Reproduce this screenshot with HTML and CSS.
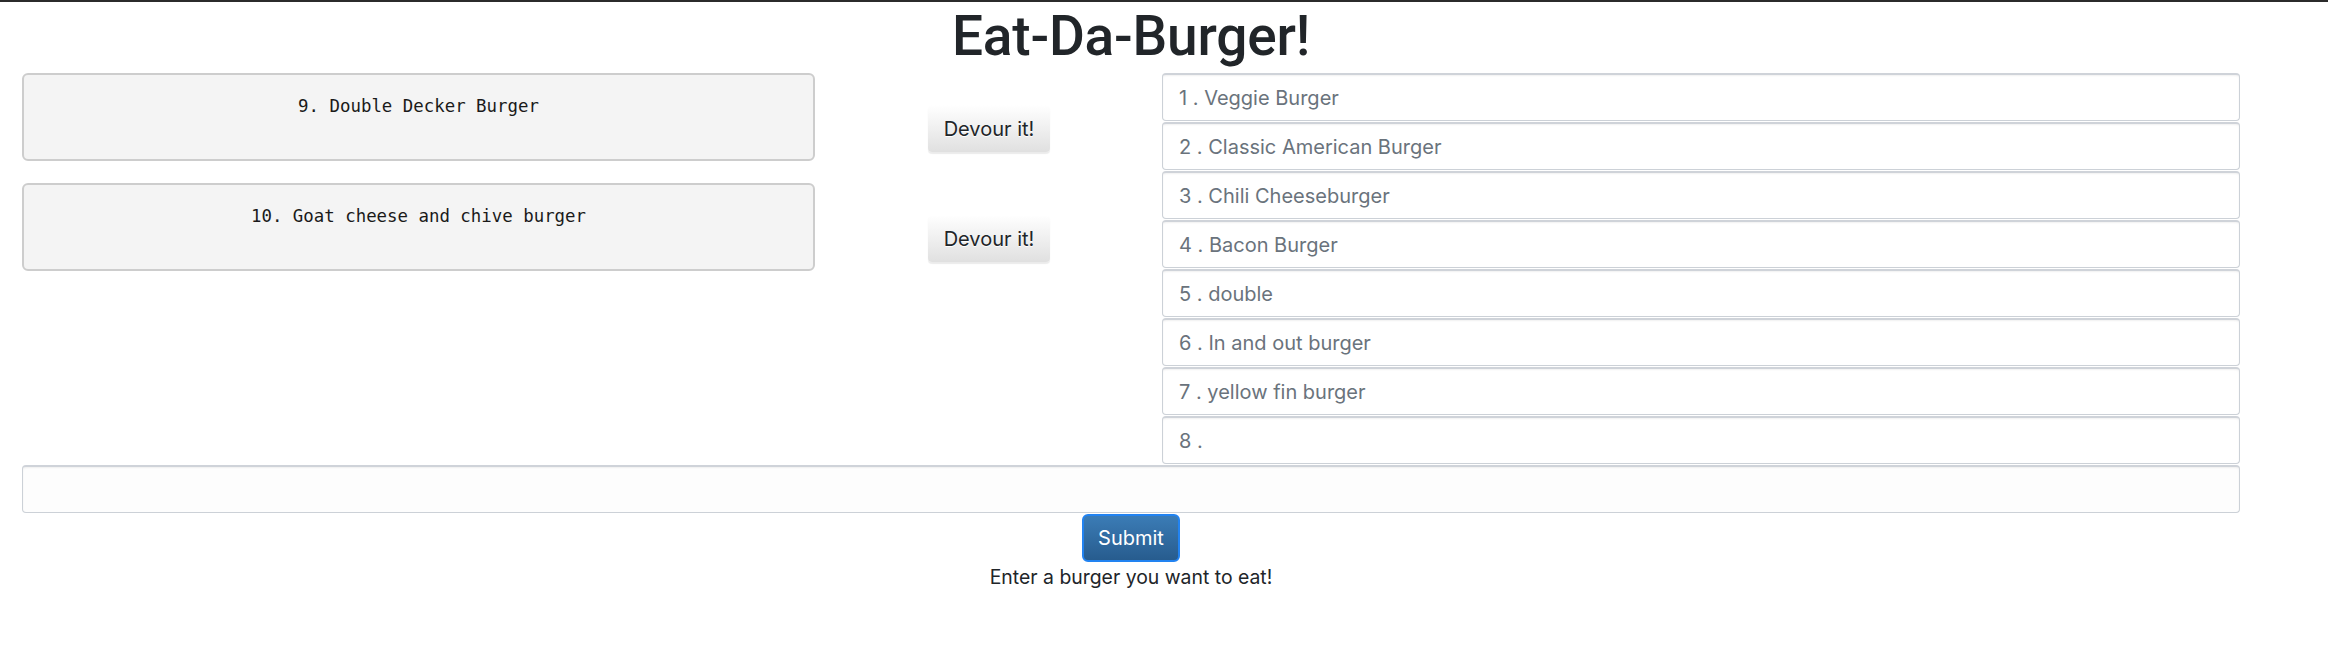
FILE: index.html
```html
<!DOCTYPE html>
<html lang="en">
<head>
<meta charset="utf-8">
<title>Eat-Da-Burger!</title>
<link rel="stylesheet" href="styles.css">
</head>
<body>
<div class="page">
  <h1 class="title">Eat-Da-Burger!</h1>
  <div class="main">
    <div class="devoured">
      <div class="row">
        <div class="card">9. Double Decker Burger</div>
        <button class="btn-devour" type="button">Devour it!</button>
      </div>
      <div class="row">
        <div class="card">10. Goat cheese and chive burger</div>
        <button class="btn-devour" type="button">Devour it!</button>
      </div>
    </div>
    <ul class="list">
      <li class="item">1 . Veggie Burger</li>
      <li class="item">2 . Classic American Burger</li>
      <li class="item">3 . Chili Cheeseburger</li>
      <li class="item">4 . Bacon Burger</li>
      <li class="item">5 . double</li>
      <li class="item">6 . In and out burger</li>
      <li class="item">7 . yellow fin burger</li>
      <li class="item">8 .</li>
    </ul>
  </div>
  <form class="form">
    <input class="field" type="text" aria-label="Burger name">
    <button class="btn-submit" type="button">Submit</button>
    <p class="hint">Enter a burger you want to eat!</p>
  </form>
</div>
</body>
</html>
```

FILE: styles.css
```css
* { box-sizing: border-box; }

html, body {
  margin: 0;
  padding: 0;
  background: #ffffff;
}

body {
  border-top: 2px solid #2b2b2b;
  font-family: Inter, "Noto Sans", "Liberation Sans", sans-serif;
  color: #212529;
}

.page {
  width: 2218px;
  margin-left: 22px;
}

.title {
  margin: 0;
  text-align: center;
  font-family: Roboto, Inter, "Liberation Sans", sans-serif;
  font-size: 55px;
  line-height: 68px;
  height: 71px;
  font-weight: 500;
  letter-spacing: -0.2px;
  color: #212529;
}

.main {
  display: flex;
  align-items: flex-start;
}

.devoured {
  width: 1140px;
  display: flex;
  flex-direction: column;
  gap: 22px;
}

.row {
  display: flex;
  align-items: flex-start;
}

.card {
  width: 793px;
  height: 88px;
  padding-top: 18px;
  background: #f4f4f4;
  border: 2px solid #cdcdcd;
  border-radius: 6px;
  text-align: center;
  font-family: "DejaVu Sans Mono", "Liberation Mono", monospace;
  font-size: 17.4px;
  line-height: 26px;
  color: #1a1a1a;
}

.btn-devour {
  margin-left: 113px;
  margin-top: 32px;
  width: 122px;
  height: 47px;
  padding: 0;
  border: none;
  border-radius: 4px;
  background: linear-gradient(to bottom, #ffffff 0%, #e0e0e0 100%);
  box-shadow: 0 2px 1px rgba(0, 0, 0, 0.08);
  font-family: Inter, "Noto Sans", "Liberation Sans", sans-serif;
  font-size: 20px;
  color: #212529;
  text-shadow: 0 1px 0 #ffffff;
}

.list {
  list-style: none;
  margin: 0;
  padding: 0;
  width: 1078px;
  display: flex;
  flex-direction: column;
  gap: 1px;
}

.item {
  height: 48px;
  padding: 0 16px;
  display: flex;
  align-items: center;
  border: 1px solid #ccd1d7;
  border-top: 2px solid #cfd3d9;
  border-radius: 4px;
  box-shadow: inset 0 1px 2px rgba(0, 0, 0, 0.06);
  font-size: 20px;
  color: #6a737c;
  background: #ffffff;
}

.form {
  display: flex;
  flex-direction: column;
  align-items: center;
  margin-top: 1px;
}

.field {
  width: 100%;
  height: 48px;
  border: 1px solid #ccd1d7;
  border-top: 2px solid #cfd3d9;
  border-radius: 4px;
  box-shadow: inset 0 1px 2px rgba(0, 0, 0, 0.06);
  background: #fdfdfd;
  font-size: 20px;
  padding: 0 16px;
}

.btn-submit {
  margin-top: 1px;
  width: 98px;
  height: 48px;
  padding: 0;
  border: 2px solid #2283f1;
  border-radius: 6px;
  background: linear-gradient(to bottom, #3b7cb6 0%, #275c8e 100%);
  color: #ffffff;
  font-family: Inter, "Noto Sans", "Liberation Sans", sans-serif;
  font-size: 20px;
}

.hint {
  margin: 0;
  font-size: 19.4px;
  line-height: 30px;
  color: #212529;
}
```
